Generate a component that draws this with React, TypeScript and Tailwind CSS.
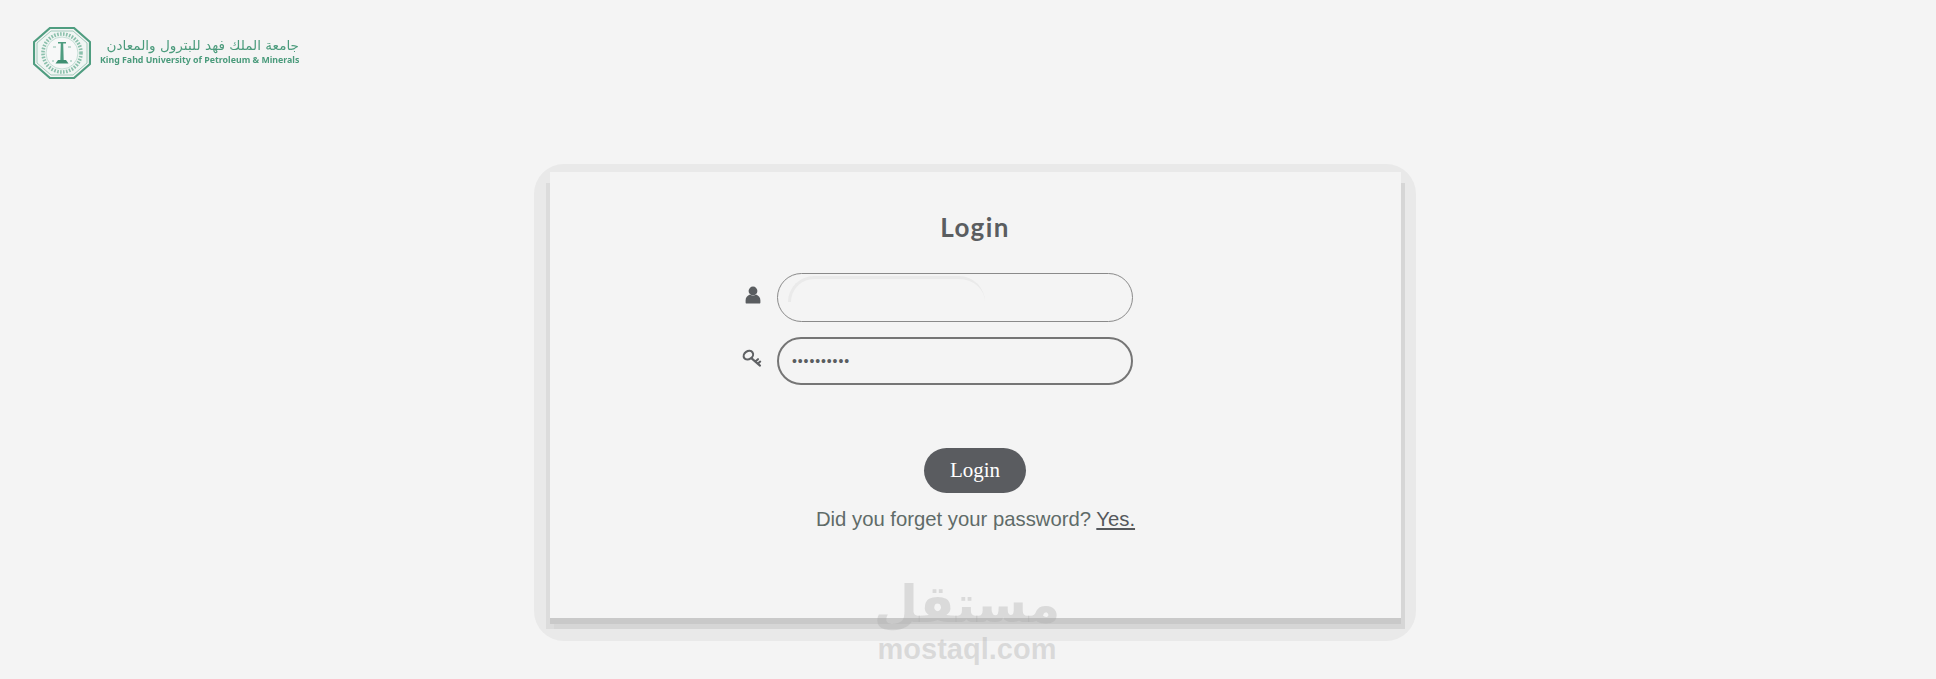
import { useState } from 'react';

function Seal() {
  return (
    <svg width="58" height="52" viewBox="0 0 58 52" className="shrink-0">
      <polygon points="17,1 41,1 57,15 57,37 41,51 17,51 1,37 1,15" fill="#f4f4f4" stroke="#4f9d80" strokeWidth="2.2" />
      <polygon points="18,4 40,4 54,16 54,36 40,48 18,48 4,36 4,16" fill="#f0f5f3" stroke="#8dc0ad" strokeWidth="0.8" />
      <circle cx="29" cy="26" r="19" fill="none" stroke="#5fa98d" strokeWidth="3.6" strokeDasharray="1.6 1.4" opacity="0.7" />
      <circle cx="29" cy="26" r="16" fill="#f7f8f8" stroke="#a5cfc0" strokeWidth="0.6" />
      <path d="M25 15h8v1.6h-2.8l.5 16.4h-3.4l.5-16.4H25z" fill="#4f9d80" />
      <path d="M22.5 36.6l2.5-3.6h8l2.5 3.6z" fill="#3f8f72" />
      <path d="M19 34h2M37 34h2M20 20h3M35 20h3" stroke="#8dc0ad" strokeWidth="1" />
    </svg>
  );
}

function UserIcon() {
  return (
    <svg width="16" height="18" viewBox="0 0 16 18" fill="#5a5d60">
      <circle cx="8" cy="5" r="4.4" />
      <path d="M5 8.6 C2.4 9.6 .6 11.4 .6 14.2 V16.4 C.6 17.2 1.2 17.6 2 17.6 H14 C14.8 17.6 15.4 17.2 15.4 16.4 V14.2 C15.4 11.4 13.6 9.6 11 8.6 C9.4 10 6.6 10 5 8.6 Z" />
    </svg>
  );
}

function KeyIcon() {
  return (
    <svg width="20" height="19" viewBox="0 0 20 19" fill="none" stroke="#5f6164" strokeWidth="2.1" strokeLinecap="round">
      <ellipse cx="6.4" cy="6.2" rx="5" ry="4" transform="rotate(-35 6.4 6.2)" />
      <path d="M9.6 9.4l8.4 7.2M13.4 12.6l2.6-2.4M15.8 14.8l2.4-2.2" />
    </svg>
  );
}

export default function App() {
  const [username, setUsername] = useState('');
  const [password, setPassword] = useState('abcdefghij');

  return (
    <div className="relative h-[679px] overflow-hidden bg-[#f4f4f4] font-['Liberation_Sans',sans-serif]">
      <header className="flex items-center gap-[9px] pl-[33px] pt-[27px] blur-[0.3px]">
        <Seal />
        <div className="-mt-[2px] flex w-[199px] flex-col text-[#4b9b7c]">
          <span dir="rtl" className="h-[14px] whitespace-nowrap text-[13.6px] leading-[14px] font-['DejaVu_Sans',sans-serif]">
            جامعة الملك فهد للبترول والمعادن
          </span>
          <span className="mt-[3px] whitespace-nowrap text-[8.8px] leading-[11px] font-bold font-['Noto_Sans',sans-serif]">
            King Fahd University of Petroleum &amp; Minerals
          </span>
        </div>
      </header>

      <div className="mt-[85px] ml-[534px] h-[477px] w-[882px] rounded-[30px] bg-[#e9e9e9] pt-2 pl-4">
        <main className="flex h-[446px] w-[851px] flex-col items-center bg-[#f4f4f4] shadow-[0_6px_0_#c9c9c9,4px_11px_0_#d6d6d6,-4px_11px_0_#dcdcdc]">
          <h1 className="mt-[37px] -ml-[1px] h-[36px] text-[26px] leading-[36px] font-bold tracking-[1.4px] text-[#5a5d60] font-['Lato',sans-serif]">
            Login
          </h1>

          <div className="mt-[28px] ml-[192px] flex flex-col gap-[15px] self-start">
            <div className="flex items-center">
              <div className="flex w-[35px] justify-start pl-[3px] pb-[5px]">
                <UserIcon />
              </div>
              <div className="relative">
                <input
                  value={username}
                  onChange={(e) => setUsername(e.target.value)}
                  className="block h-[49px] w-[356px] rounded-full border border-[#8a8a8a] bg-transparent px-[15px] text-[16px] text-[#5a5d60] outline-none"
                />
                <div className="pointer-events-none absolute top-[3px] left-[11px] h-[26px] w-[197px] rounded-t-[26px] border-t-[3px] border-l-[3px] border-[#eaeaea]" />
              </div>
            </div>
            <div className="flex items-center">
              <div className="flex w-[35px] justify-start pb-[5px]">
                <KeyIcon />
              </div>
              <input
                type="password"
                value={password}
                onChange={(e) => setPassword(e.target.value)}
                className="block h-[48px] w-[356px] rounded-full border-2 border-[#757575] bg-transparent px-[13px] text-[14px] tracking-[0.9px] text-[#5a5d60] outline-none"
              />
            </div>
          </div>

          <button className="mt-[63px] -ml-[1px] h-[45px] w-[102px] rounded-full bg-[#5a5c60] text-[21px] text-white font-['Liberation_Serif',serif]">
            Login
          </button>

          <p className="mt-[13px] text-[20.3px] leading-[26px] text-[#5f6b68]">
            Did you forget your password?{' '}
            <a href="#" className="text-[#55585c] underline">
              Yes.
            </a>
          </p>
        </main>
      </div>

      {/* watermark sits on top of the card */}
      <div className="pointer-events-none absolute top-[576px] left-[878px] flex w-[178px] flex-col items-center text-[#a8a8a8]/35">
        <span dir="rtl" className="h-[58px] text-[51px] leading-[58px] font-bold font-['DejaVu_Sans',sans-serif]">
          مستقل
        </span>
        <span className="text-[29px] leading-[30px] font-bold">mostaql.com</span>
      </div>
    </div>
  );
}
